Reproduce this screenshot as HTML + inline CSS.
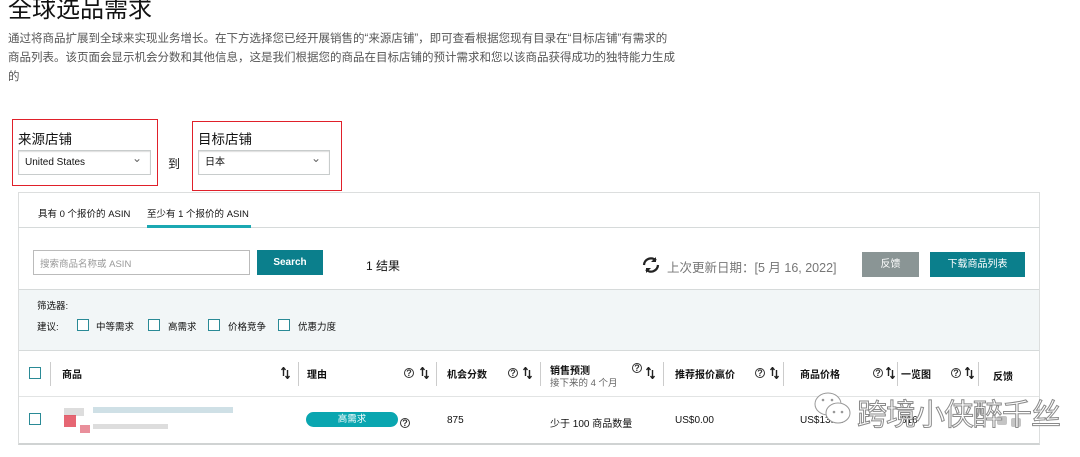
<!DOCTYPE html>
<html><head><meta charset="utf-8"><style>
*{margin:0;padding:0;box-sizing:border-box}
body{width:1080px;height:457px;overflow:hidden;background:#fff;font-family:"Liberation Sans","Noto Sans CJK SC",sans-serif;color:#111;position:relative}
.a{position:absolute;white-space:nowrap}
.t{font-size:24px;left:8px;top:-11px;color:#111}
.p{left:8px;font-size:11.5px;color:#555;line-height:14px}
.red{position:absolute;border:1.5px solid #e0202a}
.sel{position:absolute;border:1px solid #c8cccc;font-size:10px;padding-left:6px;line-height:23px;height:25px;box-shadow:0 1px 1px #ddd inset}
.sel:after{content:"⌄";position:absolute;right:8px;top:-4px;color:#666;font-size:12px}
.lbl{font-size:13.5px;color:#111}
.panel{position:absolute;left:18px;top:192px;width:1022px;height:253px;border:1px solid #dcdede;border-bottom:2px solid #d0d3d3}
.cb{position:absolute;width:12px;height:12px;border:1.3px solid #2a8a96;background:#fff}
.h{font-size:10px;font-weight:bold;color:#111}
.q{font-size:9px;color:#333;border:1px solid #333;border-radius:50%;width:10px;height:10px;line-height:9px;text-align:center;font-weight:bold}
.s{position:absolute}
.dv{position:absolute;width:1px;height:24px;background:#ccc;top:362px}
.c{font-size:10px;color:#111}
</style></head><body>
<div class="a t">全球选品需求</div>
<div class="a p" style="top:32px">通过将商品扩展到全球来实现业务增长。在下方选择您已经开展销售的“来源店铺”，即可查看根据您现有目录在“目标店铺”有需求的</div>
<div class="a p" style="top:51px">商品列表。该页面会显示机会分数和其他信息，这是我们根据您的商品在目标店铺的预计需求和您以该商品获得成功的独特能力生成</div>
<div class="a p" style="top:70px">的</div>

<div class="red" style="left:12px;top:119px;width:146px;height:67px"></div>
<div class="a lbl" style="left:18px;top:128px">来源店铺</div>
<div class="sel" style="left:18px;top:150px;width:133px">United States</div>
<div class="a" style="left:168px;top:155px;font-size:12px">到</div>
<div class="red" style="left:192px;top:121px;width:150px;height:70px"></div>
<div class="a lbl" style="left:198px;top:128px">目标店铺</div>
<div class="sel" style="left:198px;top:150px;width:132px">日本</div>

<div class="panel"></div>
<div class="a" style="left:18px;top:227px;width:1022px;height:1px;background:#d6dada"></div>
<div class="a" style="left:38px;top:206px;font-size:9.5px">具有 0 个报价的 ASIN</div>
<div class="a" style="left:147px;top:206px;font-size:9.5px">至少有 1 个报价的 ASIN</div>
<div class="a" style="left:147px;top:225px;width:104px;height:3px;background:#1ba8b2"></div>

<div class="a" style="left:33px;top:250px;width:217px;height:25px;border:1px solid #bbb;font-size:9.5px;color:#999;padding:5px 6px">搜索商品名称或 ASIN</div>
<div class="a" style="left:257px;top:250px;width:66px;height:25px;background:#0b7f8c;color:#fff;font-size:10px;text-align:center;line-height:25px;font-weight:bold">Search</div>
<div class="a" style="left:366px;top:257px;font-size:12px">1 结果</div>
<svg class="a" style="left:641px;top:256px" width="20" height="18" viewBox="0 0 20 18"><path d="M3 9a7 7 0 0 1 12-4.5M17 9a7 7 0 0 1-12 4.5" stroke="#222" stroke-width="2.3" fill="none"/><path d="M15 1v5h-5z M5 17v-5h5z" fill="#222"/></svg>
<div class="a" style="left:667px;top:257px;font-size:12.5px;color:#777">上次更新日期：[5 月 16, 2022]</div>
<div class="a" style="left:862px;top:252px;width:57px;height:25px;background:#8a9595;color:#fff;font-size:10px;text-align:center;line-height:25px">反馈</div>
<div class="a" style="left:930px;top:252px;width:95px;height:25px;background:#0b7f8c;color:#fff;font-size:10px;text-align:center;line-height:25px">下载商品列表</div>

<div class="a" style="left:19px;top:289px;width:1020px;height:62px;background:#f2f6f7;border-top:1px solid #d6dada;border-bottom:1px solid #d6dada"></div>
<div class="a" style="left:37px;top:298px;font-size:9.5px">筛选器:</div>
<div class="a" style="left:37px;top:319px;font-size:9.5px">建议:</div>
<div class="cb" style="left:77px;top:319px"></div><div class="a" style="left:96px;top:319px;font-size:9.5px">中等需求</div>
<div class="cb" style="left:148px;top:319px"></div><div class="a" style="left:168px;top:319px;font-size:9.5px">高需求</div>
<div class="cb" style="left:208px;top:319px"></div><div class="a" style="left:228px;top:319px;font-size:9.5px">价格竞争</div>
<div class="cb" style="left:278px;top:319px"></div><div class="a" style="left:298px;top:319px;font-size:9.5px">优惠力度</div>

<svg width="0" height="0" style="position:absolute"><defs><g id="ar"><path d="M2.5 9V1M0.5 3l2-2.5 2 2.5" stroke="#222" stroke-width="1.4" fill="none"/><path d="M6.5 3v8M4.5 9l2 2.5 2-2.5" stroke="#222" stroke-width="1.4" fill="none"/></g></defs></svg>
<div class="cb" style="left:29px;top:367px"></div>
<div class="dv" style="left:50px"></div>
<div class="a h" style="left:62px;top:366px">商品</div>
<svg class="s" style="left:281px;top:367px" width="9" height="12"><use href="#ar"/></svg>
<div class="dv" style="left:298px"></div>
<div class="a h" style="left:307px;top:366px">理由</div>
<div class="a q" style="left:404px;top:368px">?</div><svg class="s" style="left:420px;top:367px" width="9" height="12"><use href="#ar"/></svg>
<div class="dv" style="left:436px"></div>
<div class="a h" style="left:447px;top:366px">机会分数</div>
<div class="a q" style="left:508px;top:368px">?</div><svg class="s" style="left:523px;top:367px" width="9" height="12"><use href="#ar"/></svg>
<div class="dv" style="left:540px"></div>
<div class="a h" style="left:550px;top:362px">销售预测</div>
<div class="a" style="left:550px;top:375px;font-size:9.5px;color:#666">接下来的 4 个月</div>
<div class="a q" style="left:632px;top:363px">?</div><svg class="s" style="left:646px;top:367px" width="9" height="12"><use href="#ar"/></svg>
<div class="dv" style="left:663px"></div>
<div class="a h" style="left:675px;top:366px">推荐报价赢价</div>
<div class="a q" style="left:755px;top:368px">?</div><svg class="s" style="left:770px;top:367px" width="9" height="12"><use href="#ar"/></svg>
<div class="dv" style="left:783px"></div>
<div class="a h" style="left:800px;top:366px">商品价格</div>
<div class="a q" style="left:873px;top:368px">?</div><svg class="s" style="left:886px;top:367px" width="9" height="12"><use href="#ar"/></svg>
<div class="dv" style="left:897px"></div>
<div class="a h" style="left:901px;top:366px">一览图</div>
<div class="a q" style="left:951px;top:368px">?</div><svg class="s" style="left:965px;top:367px" width="9" height="12"><use href="#ar"/></svg>
<div class="dv" style="left:978px"></div>
<div class="a h" style="left:993px;top:368px">反馈</div>
<div class="a" style="left:19px;top:396px;width:1020px;height:1px;background:#e2e4e4"></div>

<div class="cb" style="left:29px;top:413px"></div>
<div class="a" style="left:64px;top:408px;width:20px;height:8px;background:#ddd"></div>
<div class="a" style="left:64px;top:415px;width:12px;height:12px;background:#e04050;opacity:.8"></div>
<div class="a" style="left:80px;top:425px;width:10px;height:8px;background:#e06070;opacity:.7"></div>
<div class="a" style="left:93px;top:407px;width:140px;height:6px;background:#cfe0e6"></div>
<div class="a" style="left:93px;top:424px;width:75px;height:5px;background:#ddd"></div>
<div class="a" style="left:306px;top:412px;width:92px;height:15px;background:#0aa6b0;border-radius:8px;color:#fff;font-size:9.5px;text-align:center;line-height:15px">高需求</div>
<div class="a q" style="left:400px;top:418px">?</div>
<div class="a c" style="left:447px;top:415px">875</div>
<div class="a c" style="left:550px;top:415px">少于 100 商品数量</div>
<div class="a c" style="left:675px;top:415px">US$0.00</div>
<div class="a c" style="left:800px;top:415px">US$13.99</div>
<div class="a c" style="left:901px;top:415px">816</div>
<div class="a" style="left:997px;top:416px;width:10px;height:9px;background:#c4c4c4;border-radius:2px"></div>
<div class="a" style="left:1011px;top:418px;width:10px;height:9px;background:#c4c4c4;border-radius:2px"></div>

<svg class="a" style="left:812px;top:390px" width="42" height="36" viewBox="0 0 42 36"><ellipse cx="16" cy="14" rx="13" ry="11" fill="#fff" stroke="#999"/><ellipse cx="26" cy="23" rx="12" ry="10" fill="#fff" stroke="#999"/><circle cx="22" cy="22" r="1.3" fill="#999"/><circle cx="30" cy="22" r="1.3" fill="#999"/><circle cx="11" cy="10" r="1.3" fill="#999"/><circle cx="20" cy="10" r="1.3" fill="#999"/></svg>
<div class="a" style="left:857px;top:390px;font-size:30px;color:#fff;-webkit-text-stroke:1px #8a8a8a;letter-spacing:-1px">跨境小侠醉千丝</div>
</body></html>
